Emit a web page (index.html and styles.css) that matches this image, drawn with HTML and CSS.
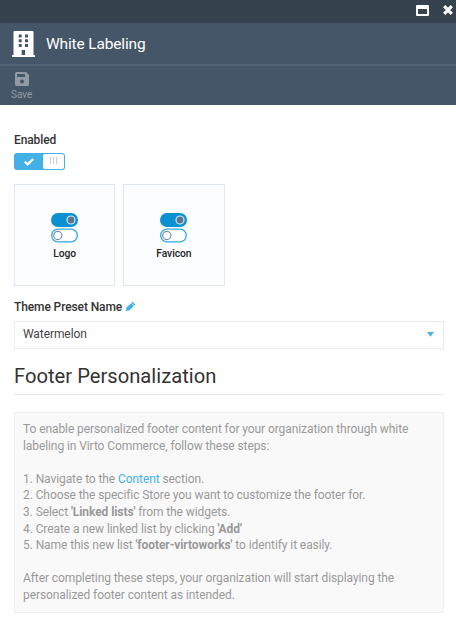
FILE: index.html
```html
<!DOCTYPE html>
<html lang="en">
<head>
<meta charset="utf-8">
<title>White Labeling</title>
<link rel="stylesheet" href="styles.css">
</head>
<body>
<div class="blade">
  <div class="window-bar">
    <svg class="icon-max" width="13" height="11" viewBox="0 0 13 11"><path fill="#fff" fill-rule="evenodd" d="M1 0h11a1 1 0 0 1 1 1v9a1 1 0 0 1-1 1H1a1 1 0 0 1-1-1V1a1 1 0 0 1 1-1zM2 4v5h9V4z"/></svg>
    <svg class="icon-close" width="10" height="10" viewBox="0 0 10 10"><path stroke="#fff" stroke-width="3.2" d="M1.200 1.200l7.600 7.600M8.800 1.200L1.200 8.800"/></svg>
  </div>
  <header class="blade-header">
    <svg class="icon-building" width="23" height="26" viewBox="0 0 23 26"><path fill="#fff" fill-rule="evenodd" d="M2.500 0h18a1 1 0 0 1 1 1v23h.7a.8.8 0 0 1 .8.8V26H0v-1.200a.8.8 0 0 1 .8-.8h.7V1a1 1 0 0 1 1-1zM6.700 3.500v3h3v-3zM13 3.500v3h3v-3zM6.700 8.300v3h3v-3zM13 8.300v3h3v-3zM6.700 13v3h3v-3zM13 13v3h3v-3zM9.700 19v5h3.400v-5z"/></svg>
    <h1 class="blade-title">White Labeling</h1>
  </header>
  <div class="toolbar">
    <button class="tool">
      <svg width="14" height="14" viewBox="0 0 14 14"><path fill="currentColor" fill-rule="evenodd" d="M1.500 0H11l3 3v9.500a1.500 1.500 0 0 1-1.500 1.500h-11A1.500 1.500 0 0 1 0 12.500v-11A1.500 1.500 0 0 1 1.500 0zM2 2v3h8V2zM7 7.500a2 2 0 1 0 0 4 2 2 0 0 0 0-4z"/></svg>
      <span>Save</span>
    </button>
  </div>
  <main class="content">
    <div class="label">Enabled</div>
    <div class="switch">
      <svg width="10" height="8" viewBox="0 0 10 8"><path fill="none" stroke="#fff" stroke-width="2.300" d="M.8 3.700l2.900 2.700L9.200 1"/></svg>
      <span class="handle"><i></i><i></i><i></i></span>
    </div>
    <div class="widgets">
      <div class="widget">
        <svg width="27" height="30" viewBox="0 0 27 30"><rect width="27" height="14" rx="7" fill="#0a91d1"/><circle cx="20" cy="7" r="4" fill="#5c7490" stroke="#d5e8f4" stroke-width="1.200"/><rect x=".7" y="16.200" width="25.600" height="12.600" rx="6.300" fill="#fff" stroke="#36a8dc" stroke-width="1.300"/><circle cx="6.800" cy="22.500" r="4.100" fill="#fff" stroke="#7b8ea6" stroke-width="1.200"/></svg>
        <span>Logo</span>
      </div>
      <div class="widget">
        <svg width="27" height="30" viewBox="0 0 27 30"><rect width="27" height="14" rx="7" fill="#0a91d1"/><circle cx="20" cy="7" r="4" fill="#5c7490" stroke="#d5e8f4" stroke-width="1.200"/><rect x=".7" y="16.200" width="25.600" height="12.600" rx="6.300" fill="#fff" stroke="#36a8dc" stroke-width="1.300"/><circle cx="6.800" cy="22.500" r="4.100" fill="#fff" stroke="#7b8ea6" stroke-width="1.200"/></svg>
        <span>Favicon</span>
      </div>
    </div>
    <div class="label preset">Theme Preset Name
      <svg width="9" height="9" viewBox="0 0 9 9"><path fill="#43b0e6" d="M0 9l.4-3.300L4.900 1.200l2.900 2.900L3.300 8.600zM5.300.8l.5-.5a1 1 0 0 1 1.300 0l1.600 1.600a1 1 0 0 1 0 1.300l-.5.5z"/></svg>
    </div>
    <div class="select"><span>Watermelon</span><svg width="7" height="5" viewBox="0 0 7 5"><path fill="#43b0e6" d="M0 0h7L3.500 4.800z"/></svg></div>
    <h2 class="section-title">Footer Personalization</h2>
    <div class="note">
      To enable personalized footer content for your organization through white<br>labeling in Virto Commerce, follow these steps:<br><br>
      1. Navigate to the <a>Content</a> section.<br>
      2. Choose the specific Store you want to customize the footer for.<br>
      3. Select <b>'Linked lists'</b> from the widgets.<br>
      4. Create a new linked list by clicking <b>'Add'</b><br>
      5. Name this new list <b>'footer-virtoworks'</b> to identify it easily.<br><br>
      After completing these steps, your organization will start displaying the<br>personalized footer content as intended.
    </div>
  </main>
</div>
</body>
</html>
```
FILE: styles.css
```css
* { box-sizing: border-box; }
body { margin: 0; background: #fff; font-family: Roboto, "Liberation Sans", sans-serif; font-size: 12px; letter-spacing: -0.085px; color: #333; }
.blade { height: 629px; overflow: hidden; white-space: nowrap; }
svg { display: block; flex: none; }
.window-bar { height: 23px; background: #36434f; display: flex; justify-content: flex-end; gap: 14px; padding: 5px 3px 0 0; }
.blade-header { height: 43px; background: #465669; border-bottom: 2px solid #536375; display: flex; padding: 8px 0 0 12px; gap: 11px; }
.blade-title { margin: 0; font-size: 15.500px; letter-spacing: -0.160px; line-height: 26px; font-weight: 400; color: #fff; }
.toolbar { height: 39px; background: #465669; padding: 6px 0 0 11px; display: flex; }
.tool { border: 0; padding: 0; background: none; font: 10px/14px Roboto, sans-serif; color: #919aa5; display: flex; flex-direction: column; align-items: center; gap: 2px; }
.content { padding: 27px 12px 0 14px; }
.label { font-weight: 500; letter-spacing: -0.110px; line-height: 16px; color: #333; }
.switch { width: 50.500px; height: 17px; margin-top: 5px; border-radius: 3px; background: #43b0e6; padding: 1px 1px 1px 10px; display: flex; align-items: center; justify-content: space-between; }
.handle { width: 21px; height: 15px; border-radius: 2px; background: #fff; display: flex; gap: 2px; justify-content: center; padding-top: 3px; }
.handle i { width: 1px; height: 7px; background: #ccc; }
.widgets { display: flex; gap: 8px; margin-top: 14px; }
.widget { width: 101.250px; height: 101.500px; border: 1px solid #dfe8f0; background: #fbfdff; display: flex; flex-direction: column; align-items: center; padding-top: 28px; font-size: 10.300px; letter-spacing: -0.050px; font-weight: 500; line-height: 14px; color: #222; gap: 4px; }
.preset { margin-top: 13.500px; display: flex; gap: 4px; }
.preset svg { margin-top: 3px; }
.select { height: 28.500px; margin-top: 5.500px; border: 1px solid #eaecf5; display: flex; align-items: center; justify-content: space-between; padding: 0 9px 1px 8px; color: #444; }
.section-title { margin: 12px 0 0; height: 34px; border-bottom: 1px solid #e8e8e8; font-size: 20.200px; letter-spacing: 0; line-height: 31px; font-weight: 400; color: #333; }
.note { margin-top: 17px; height: 201px; padding: 8px; border: 1px solid #efefef; background: #f9f9f9; color: #999; line-height: 16.600px; }
.note a { color: #43b0e6; }
.note b { font-weight: 700; }
```
